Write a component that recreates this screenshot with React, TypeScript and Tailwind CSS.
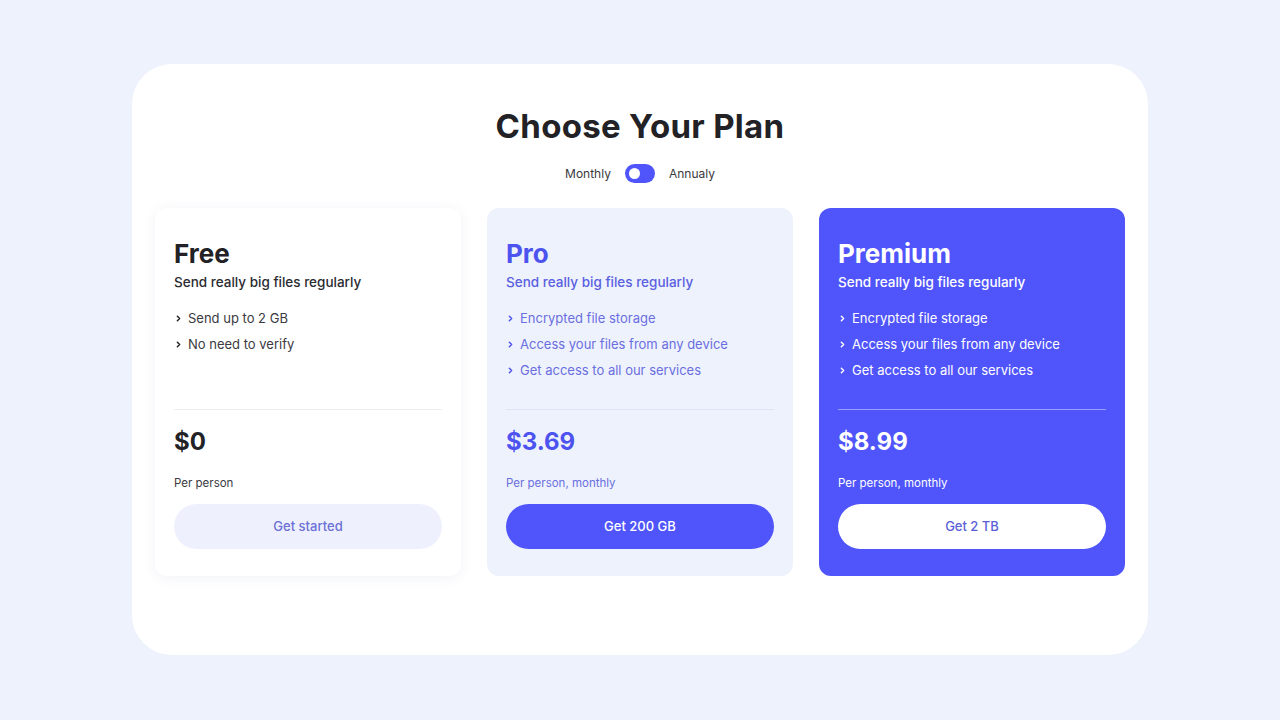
import { ChevronRight } from 'lucide-react'

const plans = [
  {
    name: 'Free',
    features: ['Send up to 2 GB', 'No need to verify'],
    price: '$0',
    per: 'Per person',
    cta: 'Get started',
    card: 'bg-white shadow-[0_2px_14px_rgba(60,70,140,0.07)]',
    title: 'text-[#222226]',
    sub: 'text-[#2b2b30]',
    item: 'text-[#3a3a40]',
    chev: 'text-[#222226]',
    line: 'border-[#ececf1]',
    priceC: 'text-[#222226]',
    perC: 'text-[#3a3a40]',
    btn: 'bg-[#eef1fd] text-[#6b6fd6]',
  },
  {
    name: 'Pro',
    features: ['Encrypted file storage', 'Access your files from any device', 'Get access to all our services'],
    price: '$3.69',
    per: 'Per person, monthly',
    cta: 'Get 200 GB',
    card: 'bg-[#eef2fd]',
    title: 'text-[#4d53ef]',
    sub: 'text-[#5a5fe0]',
    item: 'text-[#6a6ee0]',
    chev: 'text-[#4d53ef]',
    line: 'border-[#dfe3f3]',
    priceC: 'text-[#4d53ef]',
    perC: 'text-[#6a6ee0]',
    btn: 'bg-[#4f55fb] text-white',
  },
  {
    name: 'Premium',
    features: ['Encrypted file storage', 'Access your files from any device', 'Get access to all our services'],
    price: '$8.99',
    per: 'Per person, monthly',
    cta: 'Get 2 TB',
    card: 'bg-[#4f55fb]',
    title: 'text-white',
    sub: 'text-white',
    item: 'text-white',
    chev: 'text-white',
    line: 'border-[#9a9efc]',
    priceC: 'text-white',
    perC: 'text-white',
    btn: 'bg-white text-[#5a5fd8]',
  },
]

export default function App() {
  return (
    <div className="min-h-screen w-full bg-[#eef2fd] pt-[64px]" style={{ fontFamily: 'Inter, "Open Sans", sans-serif' }}>
      <div className="mx-auto w-[1016px] h-[591px] bg-white rounded-[40px] px-[23px] pt-[42px]">

        {/* Header */}
        <h1 className="text-center text-[33px] leading-[40px] font-bold tracking-[0.3px] text-[#222226]">Choose Your Plan</h1>
        <div className="mt-[18px] flex items-center justify-center gap-[14px] text-[12px] text-[#3a3a40]">
          <span>Monthly</span>
          <div className="relative w-[30px] h-[19px] rounded-full bg-[#4f55fb]">
            <div className="absolute left-[4px] top-[4px] w-[11px] h-[11px] rounded-full bg-white" />
          </div>
          <span>Annualy</span>
        </div>

        {/* Cards */}
        <div className="mt-[25px] grid grid-cols-3 gap-[26px]">
          {plans.map((p) => (
            <div key={p.name} className={`h-[368px] rounded-[12px] px-[19px] pt-[29px] flex flex-col ${p.card}`}>
              <h2 className={`text-[26px] leading-[34px] font-bold ${p.title}`}>{p.name}</h2>
              <p className={`mt-[1px] text-[13.5px] leading-[20px] font-medium ${p.sub}`}>Send really big files regularly</p>
              <ul className="mt-[16px] flex flex-col gap-[6px] h-[82px]">
                {p.features.map((f) => (
                  <li key={f} className={`flex items-center gap-[5px] text-[13px] leading-[20px] ${p.item}`}>
                    <ChevronRight size={9} strokeWidth={4} className={p.chev} />
                    {f}
                  </li>
                ))}
              </ul>
              <div className={`mt-[19px] border-t ${p.line}`} />
              <div className={`mt-[16px] text-[24px] leading-[32px] font-bold ${p.priceC}`}>{p.price}</div>
              <div className={`mt-[17px] text-[11.5px] leading-[16px] ${p.perC}`}>{p.per}</div>
              <button className={`mt-[13px] h-[45px] w-full rounded-full text-[13px] font-medium ${p.btn}`}>{p.cta}</button>
            </div>
          ))}
        </div>
      </div>
    </div>
  )
}
